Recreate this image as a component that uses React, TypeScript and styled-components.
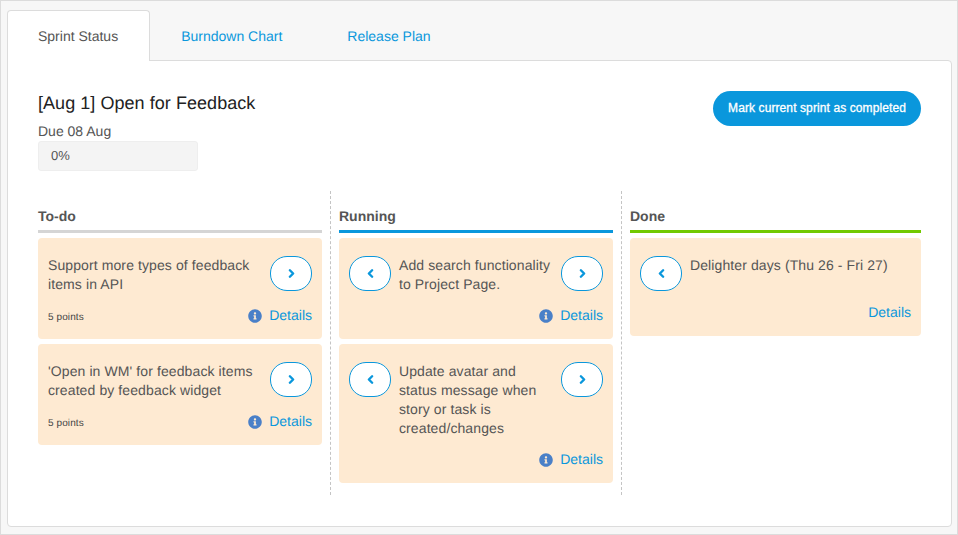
import React from 'react';
import styled, { createGlobalStyle } from 'styled-components';
import { ChevronLeft, ChevronRight } from 'lucide-react';
import { FaInfoCircle } from 'react-icons/fa';

type Story = {
  title: string;
  points?: number;
  back?: boolean;
  forward?: boolean;
};

type Lane = {
  name: string;
  width: number;
  color: string;
  stories: Array<Story>;
};

const lanes: Array<Lane> = [
  {
    name: 'To-do',
    width: 284,
    color: '#d5d5d5',
    stories: [
      { title: 'Support more types of feedback items in API', points: 5, forward: true },
      { title: "'Open in WM' for feedback items created by feedback widget", points: 5, forward: true },
    ],
  },
  {
    name: 'Running',
    width: 274,
    color: '#0a97dc',
    stories: [
      { title: 'Add search functionality to Project Page.', back: true, forward: true },
      { title: 'Update avatar and status message when story or task is created/changes', back: true, forward: true },
    ],
  },
  {
    name: 'Done',
    width: 291,
    color: '#72c900',
    stories: [{ title: 'Delighter days (Thu 26 - Fri 27)', back: true }],
  },
];

const GlobalStyle = createGlobalStyle`
  html, body {
    margin: 0;
    padding: 0;
    background: #ffffff;
  }
  body {
    font-family: "Liberation Sans", Arial, sans-serif;
    color: #555555;
    text-rendering: geometricPrecision;
  }
`;

const Frame = styled('div')`
  box-sizing: border-box;
  width: 958px;
  height: 535px;
  padding: 9px 5px 8px 6px;
  background: #f7f7f7;
  border: 1px solid #dcdcdc;
`;

const Tabs = styled('div')`
  display: flex;
  height: 51px;
  position: relative;
  z-index: 1;
`;

const Tab = styled('a')<{ $active?: boolean }>`
  box-sizing: border-box;
  height: 51px;
  display: flex;
  align-items: center;
  font-size: 14px;
  padding: 0 ${({ $active }) => ($active ? '31px' : '30px')} 0 30px;
  margin-right: ${({ $active }) => ($active ? '0' : '3px')};
  color: ${({ $active }) => ($active ? '#555555' : '#0a97dc')};
  background: ${({ $active }) => ($active ? '#ffffff' : 'transparent')};
  border: 1px solid ${({ $active }) => ($active ? '#dcdcdc' : 'transparent')};
  border-bottom: none;
  border-radius: 4px 4px 0 0;
`;

const Panel = styled('div')`
  box-sizing: border-box;
  height: 467px;
  margin-top: -1px;
  padding: 30px 30px 0 30px;
  background: #ffffff;
  border: 1px solid #dcdcdc;
  border-radius: 0 4px 4px 4px;
`;

const Header = styled('div')`
  display: flex;
  justify-content: space-between;
  align-items: flex-start;
  height: 100px;
`;

const Summary = styled('div')`
  display: flex;
  flex-direction: column;
`;

const Title = styled('h2')`
  margin: 0;
  font-size: 18px;
  font-weight: 400;
  line-height: 24px;
  letter-spacing: 0.05px;
  color: #222222;
`;

const Due = styled('div')`
  margin-top: 6px;
  font-size: 14px;
  line-height: 20px;
`;

const Progress = styled('div')`
  box-sizing: border-box;
  width: 160px;
  height: 30px;
  padding: 0 0 2px 12px;
  display: flex;
  align-items: center;
  font-size: 13px;
  background: #f4f4f4;
  border: 1px solid #eeeeee;
  border-radius: 3px;
`;

const CompleteButton = styled('button')`
  box-sizing: border-box;
  width: 208px;
  height: 35px;
  padding: 0 0 2px;
  font-family: inherit;
  font-size: 12px;
  font-weight: 400;
  letter-spacing: 0.1px;
  color: #ffffff;
  -webkit-text-stroke: 0.3px #ffffff;
  background: #0a97dc;
  border: none;
  border-radius: 18px;
`;

const Board = styled('div')`
  display: flex;
  height: 304px;
`;

const Column = styled('section')<{ $width: number; $last?: boolean }>`
  box-sizing: content-box;
  width: ${({ $width }) => $width}px;
  padding-right: ${({ $last }) => ($last ? '0' : '8px')};
  margin-right: ${({ $last }) => ($last ? '0' : '8px')};
  border-right: ${({ $last }) => ($last ? 'none' : '1px dashed #c4c4c4')};
`;

const ColumnTitle = styled('h3')<{ $color: string }>`
  margin: 0 0 5px;
  height: 42px;
  box-sizing: border-box;
  padding-top: 17px;
  font-size: 14px;
  font-weight: 700;
  line-height: 16px;
  color: #555555;
  border-bottom: 3px solid ${({ $color }) => $color};
`;

const Cards = styled('div')`
  display: flex;
  flex-direction: column;
  gap: 5px;
`;

const Card = styled('article')`
  box-sizing: border-box;
  padding: 18px 10px 14px;
  background: #feead2;
  border-radius: 4px;
`;

const CardBody = styled('div')`
  display: flex;
  align-items: flex-start;
  gap: 8px;
`;

const CardText = styled('p')`
  flex: 1;
  margin: 0;
  font-size: 14px;
  line-height: 19px;
  letter-spacing: 0.1px;
  color: #555555;
`;

const MoveButton = styled('button')`
  flex: none;
  box-sizing: border-box;
  width: 42px;
  height: 35px;
  padding: 0;
  display: flex;
  align-items: center;
  justify-content: center;
  color: #0a97dc;
  background: #ffffff;
  border: 1px solid #0a97dc;
  border-radius: 17px;
`;

const CardFooter = styled('div')`
  display: flex;
  align-items: center;
  justify-content: space-between;
  height: 20px;
  margin-top: 11px;
`;

const Points = styled('span')`
  font-size: 10px;
  line-height: 20px;
  padding-top: 5px;
  letter-spacing: 0.1px;
  color: #444444;
`;

const DetailsLink = styled('a')`
  display: flex;
  align-items: center;
  gap: 7px;
  margin-left: auto;
  font-size: 14px;
  color: #0a97dc;

  svg {
    color: #4a80c8;
    font-size: 14px;
    margin-top: 2px;
  }
`;

const StoryCard: React.FC<{ story: Story; showInfo: boolean }> = ({ story, showInfo }) => (
  <Card>
    <CardBody>
      {story.back && (
        <MoveButton>
          <ChevronLeft size={13} strokeWidth={4.5} />
        </MoveButton>
      )}
      <CardText>{story.title}</CardText>
      {story.forward && (
        <MoveButton>
          <ChevronRight size={13} strokeWidth={4.5} />
        </MoveButton>
      )}
    </CardBody>
    <CardFooter>
      {story.points && <Points>{story.points} points</Points>}
      <DetailsLink>
        {showInfo && <FaInfoCircle />}
        Details
      </DetailsLink>
    </CardFooter>
  </Card>
);

export default function App() {
  return (
    <>
      <GlobalStyle />
      <Frame>
        <Tabs>
          <Tab $active>Sprint Status</Tab>
          <Tab>Burndown Chart</Tab>
          <Tab>Release Plan</Tab>
        </Tabs>
        <Panel>
          <Header>
            <Summary>
              <Title>[Aug 1] Open for Feedback</Title>
              <Due>Due 08 Aug</Due>
              <Progress>0%</Progress>
            </Summary>
            <CompleteButton>Mark current sprint as completed</CompleteButton>
          </Header>
          <Board>
            {lanes.map((lane, i) => (
              <Column key={lane.name} $width={lane.width} $last={i === lanes.length - 1}>
                <ColumnTitle $color={lane.color}>{lane.name}</ColumnTitle>
                <Cards>
                  {lane.stories.map((story) => (
                    <StoryCard key={story.title} story={story} showInfo={lane.name !== 'Done'} />
                  ))}
                </Cards>
              </Column>
            ))}
          </Board>
        </Panel>
      </Frame>
    </>
  );
}
